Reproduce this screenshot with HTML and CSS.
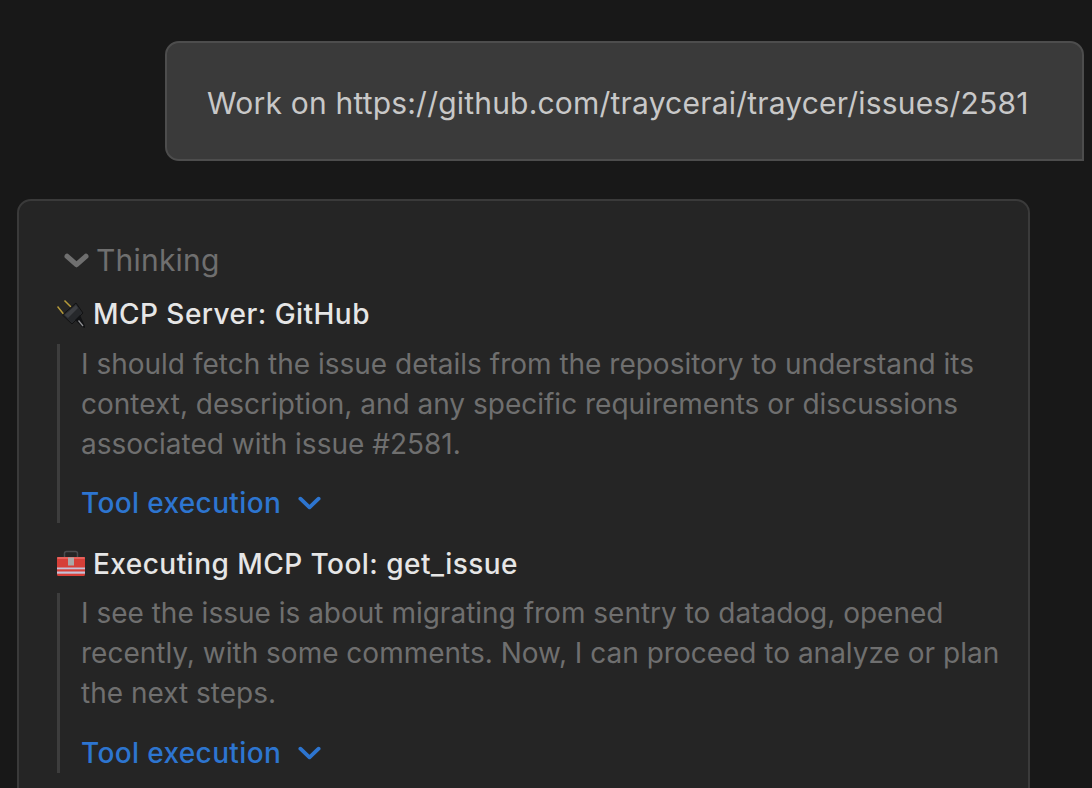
FILE: index.html
```html
<!DOCTYPE html>
<html lang="en">
<head>
<meta charset="utf-8">
<title>Thinking</title>
<link rel="stylesheet" href="styles.css">
</head>
<body>
<main class="chat">
  <div class="user-row">
    <div class="user-bubble">Work on https://github.com/traycerai/traycer/issues/2581</div>
  </div>
  <section class="card">
    <div class="thinking">
      <svg class="thinking-chevron" viewBox="0 0 24 14" aria-hidden="true"><path d="M3 3l9 8 9-8" fill="none" stroke="currentColor" stroke-width="5" stroke-linecap="round" stroke-linejoin="round"/></svg>
      <span>Thinking</span>
    </div>
    <h3 class="step-title">
      <svg class="emoji" viewBox="0 0 30 30" aria-hidden="true">
        <path d="M0.500 7.500L6.500 15M7.500 1.500L14 8" stroke="#b59a3a" stroke-width="1.500" fill="none"/>
        <path d="M5.500 16L19 4l7 10-11 11z" fill="#26282b" stroke="#0c0c0d" stroke-width="0.800"/>
        <path d="M7.500 16L19 6l2 3-10 10z" fill="#3d3f43"/>
        <path d="M18 21l5-5 5 11 0 2-3-1z" fill="#111214"/>
        <path d="M21.500 21.500l4.500 5.500" stroke="#8d8e91" stroke-width="1.300"/>
      </svg>MCP Server: GitHub</h3>
    <div class="step-body">
      <p>I should fetch the issue details from the repository to understand its context, description, and any specific requirements or discussions associated with issue #2581.</p>
      <a class="tool-link">Tool execution
        <svg class="tool-chevron" viewBox="0 0 24 14" aria-hidden="true"><path d="M2.500 2.500L12 11.500l9.500-9" fill="none" stroke="currentColor" stroke-width="4" stroke-linecap="round" stroke-linejoin="round"/></svg>
      </a>
    </div>
    <h3 class="step-title">
      <svg class="emoji" viewBox="0 0 30 30" aria-hidden="true">
        <path d="M7.500 8.500V4.500Q7.500 2.500 9.500 2.500h9Q20.500 2.500 20.500 4.500V8.500" fill="none" stroke="#4a4b4e" stroke-width="1.500"/>
        <rect x="0" y="8" width="28" height="19" rx="1.500" fill="#d63f38"/>
        <rect x="0" y="8" width="28" height="2" rx="1" fill="#e8605a"/>
        <rect x="0" y="18.500" width="28" height="1.800" fill="#c4c2d8"/>
        <rect x="0" y="22.500" width="28" height="2.200" fill="#c4c2d8"/>
        <rect x="11" y="8.500" width="6" height="8" fill="#a9a9a9"/>
      </svg>Executing MCP Tool: get_issue</h3>
    <div class="step-body">
      <p>I see the issue is about migrating from sentry to datadog, opened recently, with some comments. Now, I can proceed to analyze or plan the next steps.</p>
      <a class="tool-link">Tool execution
        <svg class="tool-chevron" viewBox="0 0 24 14" aria-hidden="true"><path d="M2.500 2.500L12 11.500l9.500-9" fill="none" stroke="currentColor" stroke-width="4" stroke-linecap="round" stroke-linejoin="round"/></svg>
      </a>
    </div>
  </section>
</main>
</body>
</html>
```
FILE: styles.css
```css
html, body {
  margin: 0;
  height: 100%;
  overflow: hidden;
  background: #181818;
}
body {
  font-family: Inter, "Noto Sans", sans-serif;
}
.chat {
  padding: 41px 8px 0 17px;
  display: flex;
  flex-direction: column;
  gap: 38px;
}
.user-row {
  display: flex;
  justify-content: flex-end;
}
.user-bubble {
  width: 919px;
  height: 120px;
  box-sizing: border-box;
  display: flex;
  align-items: center;
  padding: 3px 0 0 40px;
  background: #3a3a3a;
  border: 2px solid #4d4d4d;
  border-radius: 14px 14px 0 14px;
  color: #c8c8c8;
  font-size: 30px;
  letter-spacing: 0.2px;
  white-space: nowrap;
}
.card {
  width: 1013px;
  height: 640px;
  box-sizing: border-box;
  padding: 37px 20px 0 38px;
  background: #252525;
  border: 2px solid #3a3a3a;
  border-radius: 14px;
}
.thinking {
  display: flex;
  align-items: center;
  gap: 7px;
  padding-left: 7px;
  height: 44px;
  color: #6f6f6f;
  font-size: 30px;
  letter-spacing: 0.2px;
}
.thinking-chevron {
  width: 25px;
  height: 15px;
}
.step-title {
  display: flex;
  align-items: center;
  margin: 8px 0 6px;
  height: 48px;
  color: #e6e6e6;
  font-size: 28px;
  font-weight: 500;
  letter-spacing: 0.46px;
}
.emoji {
  width: 30px;
  height: 30px;
  margin-right: 6px;
}
.step-body {
  border-left: 3px solid #3d3d3d;
  padding-left: 21px;
}
.step-body + .step-title {
  margin: 17px 0 5px;
}
.step-body p {
  margin: 0;
  color: #6f6f6f;
  font-size: 28px;
  letter-spacing: 0;
  line-height: 40px;
}
.tool-link {
  display: flex;
  align-items: center;
  gap: 17px;
  margin-top: 19px;
  height: 40px;
  color: #2d75d0;
  font-size: 28px;
  font-weight: 500;
  letter-spacing: 0.36px;
}
.step-body:last-child .tool-link {
  margin-top: 20px;
}
.tool-chevron {
  width: 23px;
  height: 14px;
}
```
